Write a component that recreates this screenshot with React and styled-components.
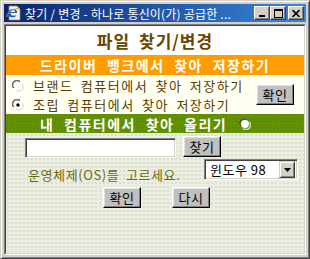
import React from 'react';
import styled, { createGlobalStyle } from 'styled-components';

const Global = createGlobalStyle`
  html, body { margin: 0; padding: 0; background: #d4d0c8; }
  body { width: 310px; height: 259px; overflow: hidden; }
`;

const KR = `"Noto Sans CJK KR", "DejaVu Sans", sans-serif`;

const Window = styled.div`
  width: 310px;
  height: 259px;
  box-sizing: border-box;
  background: #d4d0c8;
  border: 1px solid;
  border-color: #d4d0c8 #404040 #404040 #d4d0c8;
  box-shadow: inset 1px 1px 0 #fff, inset -1px -1px 0 #808080;
  padding: 3px;
  display: flex;
  flex-direction: column;
`;

const TitleBar = styled.div`
  height: 18px;
  background: linear-gradient(to right, #0a246a, #3a86dc);
  display: flex;
  align-items: center;
  padding: 0 2px 0 2px;
  gap: 3px;
  color: #fff;
  font-family: ${KR};
  font-size: 12px;
  white-space: nowrap;
  overflow: hidden;
`;

const TitleText = styled.span`
  flex: 1;
  overflow: hidden;
  letter-spacing: 0.2px;
`;

const CapButtons = styled.div`
  display: flex;
`;

const CapButton = styled.div`
  width: 16px;
  height: 14px;
  box-sizing: border-box;
  background: #d4d0c8;
  border: 1px solid;
  border-color: #fff #404040 #404040 #fff;
  box-shadow: inset -1px -1px 0 #808080;
  margin-left: ${({ $gap }) => $gap || 0}px;
  display: flex;
  align-items: center;
  justify-content: center;
`;

const Client = styled.div`
  flex: 1;
  margin-top: 2px;
  border: 1px solid;
  border-color: #808080 #fff #fff #808080;
  display: flex;
  flex-direction: column;
`;

const ClientInner = styled.div`
  flex: 1;
  border: 1px solid;
  border-color: #404040 #d4d0c8 #d4d0c8 #404040;
  display: flex;
  flex-direction: column;
  font-family: ${KR};
`;

const Heading = styled.div`
  height: 29px;
  background: #fff;
  display: flex;
  align-items: center;
  justify-content: center;
  font-size: 17px;
  font-weight: bold;
  color: #6a4600;
  letter-spacing: 1px;
  word-spacing: 4px;
`;

const Band = styled.div`
  height: ${({ $h }) => $h}px;
  background-color: ${({ $bg }) => $bg};
  background-image: ${({ $dots }) =>
    $dots ? 'radial-gradient(rgba(0,0,0,0.12) 0.7px, transparent 0.8px)' : 'none'};
  background-size: 3px 3px;
  display: flex;
  align-items: center;
  justify-content: ${({ $pl }) => ($pl ? 'flex-start' : 'center')};
  gap: 12px;
  color: #fff;
  font-size: 14px;
  font-weight: bold;
  letter-spacing: 1.5px;
  word-spacing: 5px;
  white-space: nowrap;
  padding-left: ${({ $pl }) => $pl || 0}px;
`;

const Choice = styled.div`
  height: 39px;
  background: #fffff2;
  display: flex;
  align-items: center;
  padding: 0 10px 0 6px;
`;

const Options = styled.div`
  flex: 1;
  display: flex;
  flex-direction: column;
  gap: 2px;
  padding-top: 1px;
`;

const OptionRow = styled.label`
  display: flex;
  align-items: center;
  gap: 9px;
  height: 17px;
  color: #5a3c00;
  font-size: 13px;
  letter-spacing: 1.5px;
  word-spacing: 3px;
  white-space: nowrap;
`;

const Form = styled.div`
  flex: 1;
  background-color: #edeee2;
  background-image: radial-gradient(rgba(160,170,140,0.25) 0.7px, transparent 0.8px);
  background-size: 4px 4px;
  display: flex;
  flex-direction: column;
  padding: 3px 8px 0 19px;
`;

const Row = styled.div`
  display: flex;
  align-items: ${({ $align }) => $align || 'center'};
  gap: ${({ $gap }) => $gap || 0}px;
  margin-top: ${({ $mt }) => $mt || 0}px;
  padding-left: ${({ $pl }) => $pl || 0}px;
`;

const TextBox = styled.div`
  width: 151px;
  height: 20px;
  box-sizing: border-box;
  background: #fff;
  border: 1px solid;
  border-color: #808080 #fff #fff #808080;
  box-shadow: inset 1px 1px 0 #404040, inset -1px -1px 0 #d4d0c8;
  margin-top: 2px;
`;

const Button = styled.div`
  width: ${({ $w }) => $w || 38}px;
  height: ${({ $h }) => $h || 21}px;
  flex-shrink: 0;
  box-sizing: border-box;
  background: #c0c0c0;
  border: 1px solid;
  border-color: #fff #000 #000 #fff;
  box-shadow: inset -1px -1px 0 #808080, inset 1px 1px 0 #e0e0e0;
  display: flex;
  align-items: center;
  justify-content: center;
  font-size: 13px;
  color: #000;
  letter-spacing: 0.5px;
`;

const OsLabel = styled.span`
  width: 170px;
  flex-shrink: 0;
  color: #6b6b10;
  font-size: 13px;
  letter-spacing: 0.6px;
  word-spacing: 3px;
  white-space: nowrap;
  margin-top: 6px;
`;

const Select = styled.div`
  width: 94px;
  height: 21px;
  flex-shrink: 0;
  box-sizing: border-box;
  background: #fff;
  border: 1px solid;
  border-color: #808080 #fff #fff #808080;
  box-shadow: inset 1px 1px 0 #404040, inset -1px -1px 0 #d4d0c8;
  display: flex;
  align-items: center;
  padding: 2px;
  font-size: 13px;
`;

const SelectValue = styled.span`
  flex: 1;
  padding-left: 3px;
  letter-spacing: 0.5px;
  white-space: nowrap;
`;

const Arrow = styled.div`
  width: 16px;
  height: 17px;
  box-sizing: border-box;
  background: #d4d0c8;
  border: 1px solid;
  border-color: #d4d0c8 #404040 #404040 #d4d0c8;
  box-shadow: inset 1px 1px 0 #fff, inset -1px -1px 0 #808080;
  display: flex;
  align-items: center;
  justify-content: center;
`;

const Radio = ({ checked, white }) => (
  <svg width="12" height="12" viewBox="0 0 12 12" style={{ flexShrink: 0 }}>
    <path d="M1 8 A5 5 0 0 1 8 1" stroke="#808080" strokeWidth="1" fill="none" />
    <path d="M2 8 A4 4 0 0 1 8 2" stroke="#404040" strokeWidth="1" fill="none" />
    <circle cx="6" cy="6" r="4" fill="#fff" />
    <path d="M11 4 A5 5 0 0 1 4 11" stroke={white ? '#ddd' : '#fff'} strokeWidth="1" fill="none" />
    <path d="M10 4 A4 4 0 0 1 4 10" stroke="#d4d0c8" strokeWidth="1" fill="none" />
    {checked && <circle cx="6" cy="6" r="1.7" fill="#000" />}
  </svg>
);

const IeIcon = () => (
  <svg width="16" height="16" viewBox="0 0 16 16">
    <path d="M3 1 H11 L14 4 V15 H3 Z" fill="#f4f4f4" stroke="#888" strokeWidth="0.8" />
    <path d="M2.5 10 C1 7 4 3.5 8 4 C10.5 4.3 11.5 6.5 11 8 H4.5 C4.6 10 6.5 11 8.5 10.5 L10.5 10.5 C9 13 4 13.5 2.5 10 Z M4.6 7 H9 C8.8 5.6 7.8 5 6.9 5 C5.8 5 4.8 5.8 4.6 7 Z" fill="#1f5fd0" />
    <path d="M1 12 C0 9 5 5 11 3.5 C14 2.8 14.5 4 12.5 5.5" stroke="#e8a000" strokeWidth="1" fill="none" />
  </svg>
);

export default function App() {
  return (
    <>
      <Global />
      <Window>
        <TitleBar>
          <IeIcon />
          <TitleText>찾기 / 변경 - 하나로 통신이(가) 공급한 ...</TitleText>
          <CapButtons>
            <CapButton>
              <svg width="8" height="8" viewBox="0 0 8 8"><rect x="1" y="6" width="6" height="2" fill="#000" /></svg>
            </CapButton>
            <CapButton>
              <svg width="9" height="9" viewBox="0 0 9 9"><rect x="0.5" y="0.5" width="8" height="8" fill="none" stroke="#000" /><rect x="0" y="0" width="9" height="2" fill="#000" /></svg>
            </CapButton>
            <CapButton $gap={2}>
              <svg width="8" height="7" viewBox="0 0 8 7"><path d="M0.5 0 L7.5 7 M7.5 0 L0.5 7" stroke="#000" strokeWidth="1.6" /></svg>
            </CapButton>
          </CapButtons>
        </TitleBar>
        <Client>
          <ClientInner>
            <Heading>파일 찾기/변경</Heading>
            <Band $h={20} $bg="#ff9c00">드라이버 뱅크에서 찾아 저장하기</Band>
            <Choice>
              <Options>
                <OptionRow><Radio />브랜드 컴퓨터에서 찾아 저장하기</OptionRow>
                <OptionRow><Radio checked />조립 컴퓨터에서 찾아 저장하기</OptionRow>
              </Options>
              <Button>확인</Button>
            </Choice>
            <Band $h={19} $bg="#639200" $dots $pl={34}>
              <span>내 컴퓨터에서 찾아 올리기</span>
              <Radio white />
            </Band>
            <Form>
              <Row $gap={7} $align="flex-start">
                <TextBox />
                <Button>찾기</Button>
              </Row>
              <Row $gap={6} $pl={3} $mt={1} $align="flex-start">
                <OsLabel>운영체제(OS)를 고르세요.</OsLabel>
                <Select>
                  <SelectValue>윈도우 98</SelectValue>
                  <Arrow>
                    <svg width="7" height="4" viewBox="0 0 7 4"><path d="M0 0 H7 L3.5 4 Z" fill="#000" /></svg>
                  </Arrow>
                </Select>
              </Row>
              <Row $gap={31} $pl={78} $mt={3}>
                <Button>확인</Button>
                <Button>다시</Button>
              </Row>
            </Form>
          </ClientInner>
        </Client>
      </Window>
    </>
  );
}
